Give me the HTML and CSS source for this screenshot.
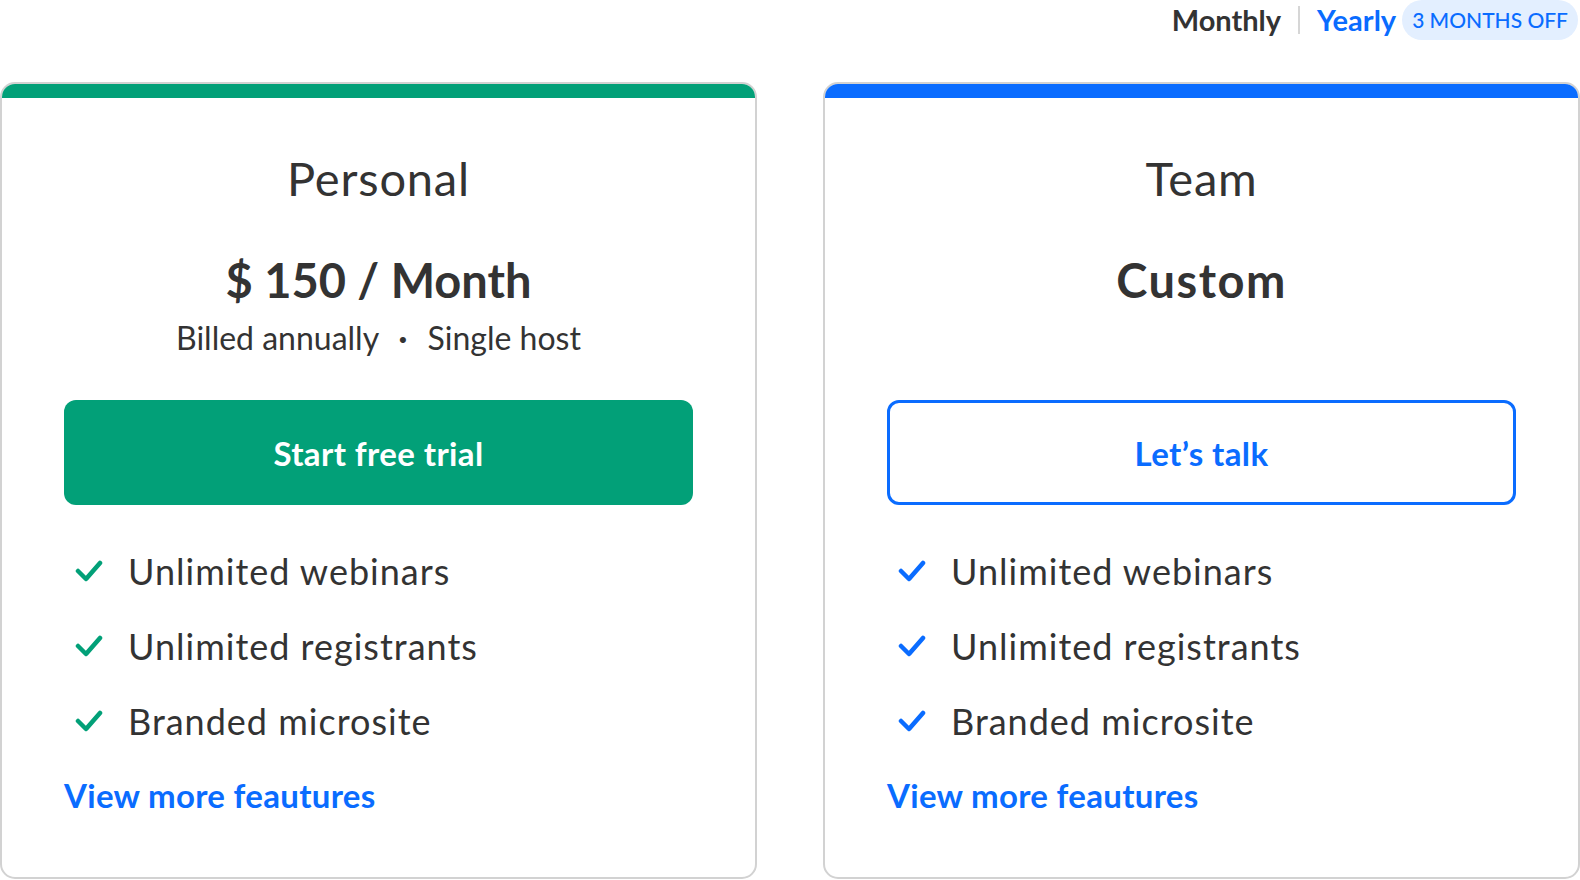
FILE: index.html
```html
<!DOCTYPE html>
<html lang="en">
<head>
<meta charset="utf-8">
<title>Pricing</title>
<link rel="stylesheet" href="styles.css">
</head>
<body>
<div class="billing">
  <span class="opt opt-monthly">Monthly</span>
  <span class="sep"></span>
  <span class="opt opt-yearly">Yearly</span>
  <span class="badge">3 MONTHS OFF</span>
</div>
<div class="plans">
  <section class="card card-green">
    <div class="bar"></div>
    <div class="body">
      <h2 class="title">Personal</h2>
      <div class="price">$ 150 / Month</div>
      <div class="sub">Billed annually <span class="dot">·</span> Single host</div>
      <a class="btn btn-solid">Start free trial</a>
      <ul class="features">
        <li><svg class="check" viewBox="0 0 28 22"><polyline points="3,11 11,19 25,3"/></svg>Unlimited webinars</li>
        <li><svg class="check" viewBox="0 0 28 22"><polyline points="3,11 11,19 25,3"/></svg>Unlimited registrants</li>
        <li><svg class="check" viewBox="0 0 28 22"><polyline points="3,11 11,19 25,3"/></svg>Branded microsite</li>
      </ul>
      <a class="more">View more feautures</a>
    </div>
  </section>
  <section class="card card-blue">
    <div class="bar"></div>
    <div class="body">
      <h2 class="title">Team</h2>
      <div class="price price-custom">Custom</div>
      <div class="sub sub-empty">&nbsp;</div>
      <a class="btn btn-outline">Let’s talk</a>
      <ul class="features">
        <li><svg class="check" viewBox="0 0 28 22"><polyline points="3,11 11,19 25,3"/></svg>Unlimited webinars</li>
        <li><svg class="check" viewBox="0 0 28 22"><polyline points="3,11 11,19 25,3"/></svg>Unlimited registrants</li>
        <li><svg class="check" viewBox="0 0 28 22"><polyline points="3,11 11,19 25,3"/></svg>Branded microsite</li>
      </ul>
      <a class="more">View more feautures</a>
    </div>
  </section>
</div>
</body>
</html>
```
FILE: styles.css
```css
* { box-sizing: border-box; }
html, body { margin: 0; padding: 0; background: #fff; }
body {
  font-family: Lato, "Open Sans", sans-serif;
  color: #333;
  width: 1580px;
  height: 880px;
  overflow: hidden;
}
.billing {
  display: flex;
  justify-content: flex-end;
  align-items: center;
  height: 40px;
  padding-right: 2px;
}
.opt { font-size: 29px; font-weight: 700; line-height: 40px; }
.opt-monthly { color: #333; }
.opt-yearly { color: #0a6cff; margin-right: 6px; }
.sep { width: 2px; height: 28px; background: #d6d6d6; margin: 0 17px; }
.badge {
  background: #e3efff;
  color: #0a6cff;
  font-size: 21px;
  font-weight: 500;
  height: 40px;
  line-height: 40px;
  padding: 0 10px;
  border-radius: 20px;
}
.plans {
  display: grid;
  grid-template-columns: 757px 757px;
  column-gap: 66px;
  margin-top: 42px;
}
.card {
  border: 2px solid #d2d2d2;
  border-radius: 15px;
  overflow: hidden;
  height: 797px;
}
.bar { height: 14px; }
.card-green .bar { background: #02a078; }
.card-blue .bar { background: #0a6cff; }
.body { padding: 0 62px; }
.title {
  margin: 50px 0 0;
  font-size: 47px;
  font-weight: 400;
  letter-spacing: 0.8px;
  line-height: 60px;
  text-align: center;
  color: #333;
}
.price {
  margin-top: 42px;
  font-size: 47px;
  font-weight: 700;
  line-height: 60px;
  text-align: center;
}
.price-custom { letter-spacing: 1.5px; }
.sub {
  margin-top: 8px;
  font-size: 32px;
  line-height: 40px;
  text-align: center;
}
.dot { margin: 0 12px; font-weight: 700; }
.btn {
  display: flex;
  align-items: center;
  justify-content: center;
  margin-top: 42px;
  height: 105px;
  border-radius: 12px;
  font-size: 33px;
  font-weight: 700;
  letter-spacing: 0.4px;
}
.btn-solid { background: #02a078; color: #fff; }
.btn-outline { border: 3px solid #0a6cff; color: #0a6cff; }
.features {
  list-style: none;
  margin: 28px 0 0;
  padding: 0;
}
.features li {
  display: flex;
  align-items: center;
  height: 75px;
  font-size: 36px;
  letter-spacing: 1px;
}
.check {
  width: 28px;
  height: 22px;
  margin: 0 25px 0 11px;
  fill: none;
  stroke-width: 4.5;
  stroke-linecap: round;
  stroke-linejoin: round;
}
.card-green .check { stroke: #02a078; }
.card-blue .check { stroke: #0a6cff; }
.more {
  display: block;
  height: 75px;
  line-height: 75px;
  font-size: 33px;
  font-weight: 700;
  letter-spacing: 0.3px;
  color: #0a6cff;
}
```
